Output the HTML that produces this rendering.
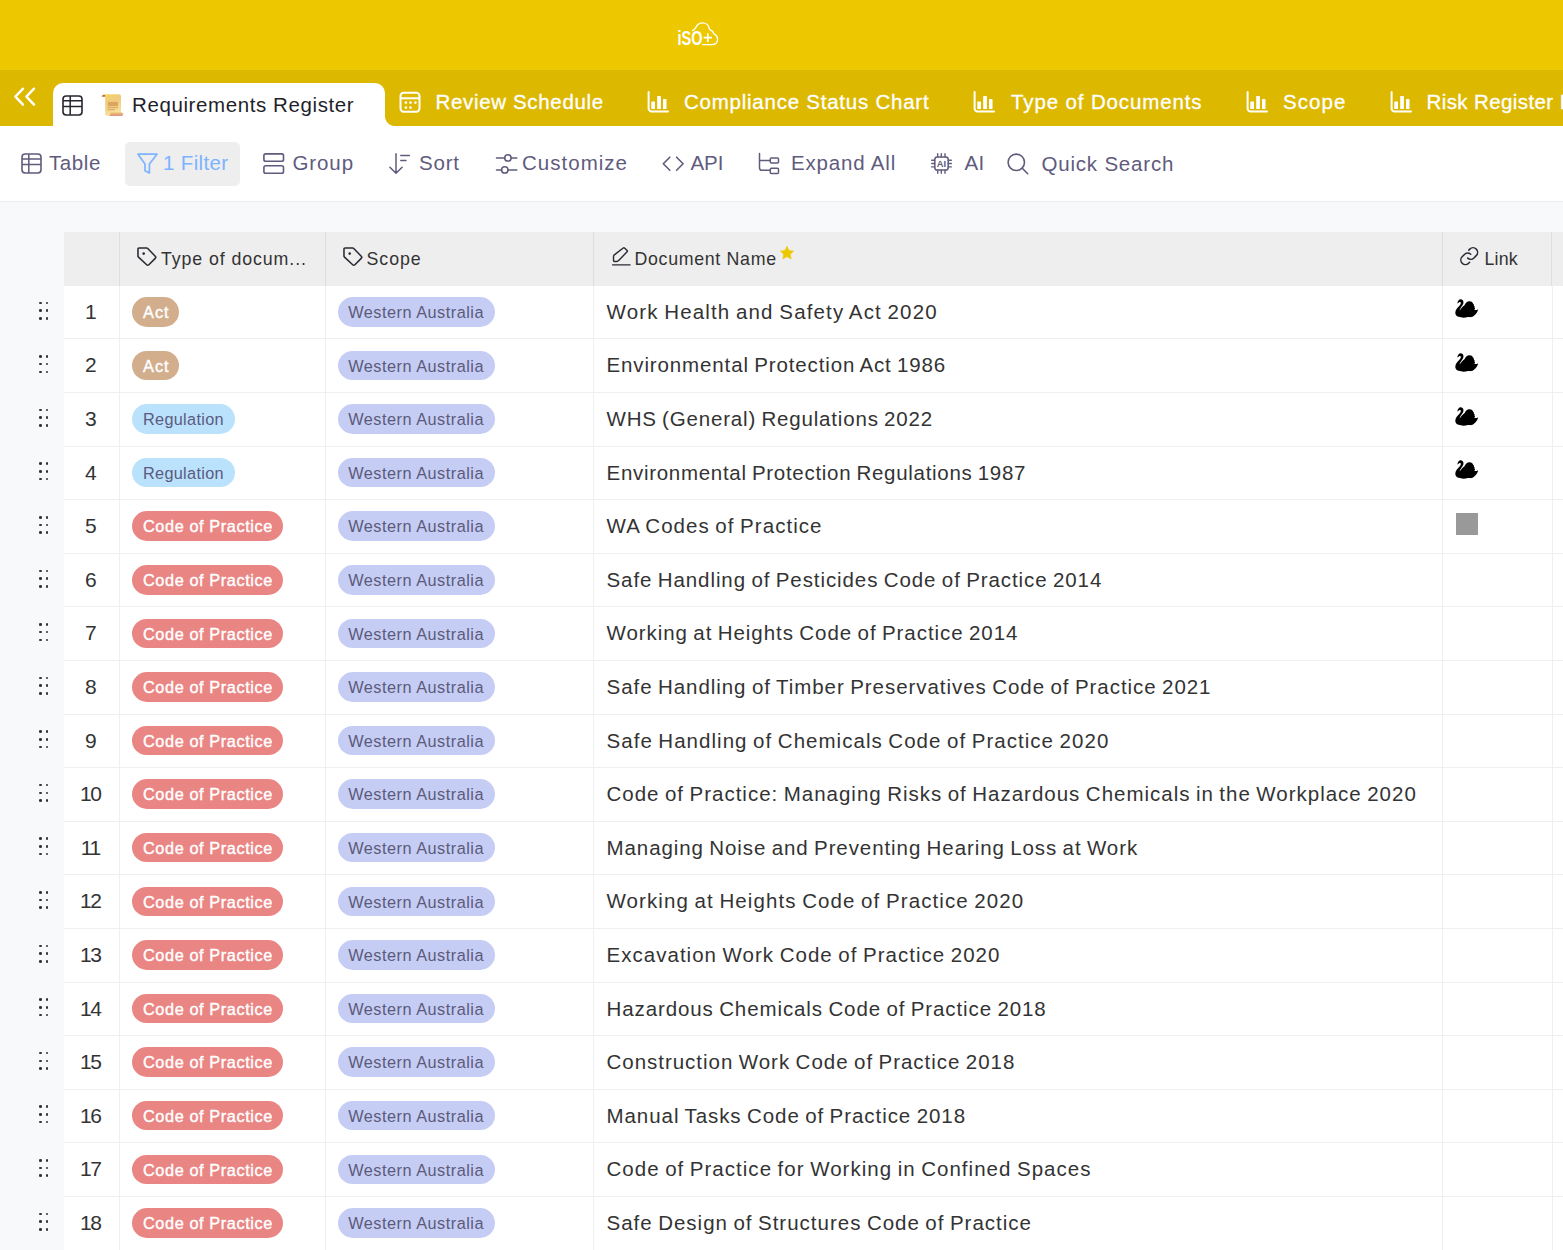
<!DOCTYPE html>
<html lang="en">
<head>
<meta charset="utf-8">
<title>Requirements Register</title>
<style>
*{box-sizing:border-box;margin:0;padding:0}
html,body{width:1563px;height:1250px;overflow:hidden}
body{position:relative;background:#f8f9fb;font-family:"Liberation Sans",sans-serif;color:#333;-webkit-font-smoothing:antialiased}
.page{position:absolute;left:0;top:0;width:1563px;height:1250px;overflow:hidden}
svg{display:block;overflow:visible}
.abs{position:absolute;white-space:nowrap}

/* ---------- top brand bar ---------- */
.hdr{position:absolute;left:0;top:0;width:1563px;height:70px;background:#edc800}
.logo{position:absolute;left:676px;top:20px;width:46px;height:28px}

/* ---------- tab bar ---------- */
.tabs{position:absolute;left:0;top:70px;width:1563px;height:56px;background:#ddb800;overflow:hidden}
.collapse{position:absolute;left:12px;top:15px;width:26px;height:22px}
.tab-active{position:absolute;left:53px;top:13px;width:332px;height:43px;background:#fff;border-radius:10px 10px 0 0}
.tab-active:after{content:"";position:absolute;right:-10px;bottom:0;width:10px;height:10px;background:radial-gradient(circle at 100% 0,rgba(255,255,255,0) 9.5px,#fff 10.5px)}
.tab-active .ico{position:absolute;left:9px;top:12px;width:21px;height:21px}
.tab-active .scroll{position:absolute;left:48px;top:10px;width:22px;height:23px}
.tab-active .lbl{position:absolute;left:79px;top:10px;font-size:20.5px;line-height:24px;color:#1f1f2b;letter-spacing:.6px;white-space:nowrap}
.tab{position:absolute;top:0;height:56px;color:#fff;white-space:nowrap}
.tab .ico{position:absolute;left:0;top:21px;width:22px;height:22px}
.tab .lbl{position:absolute;left:37px;top:20px;font-size:20.5px;line-height:24px;font-weight:400;letter-spacing:.55px;-webkit-text-stroke:.32px #fff}

/* ---------- toolbar ---------- */
.toolbar{position:absolute;left:0;top:126px;width:1563px;height:76px;background:#fff;border-bottom:1px solid #ebecef}
.tb{position:absolute;top:27px;height:21px;color:#5f5b7d;white-space:nowrap}
.tb .ico{position:absolute;left:0;top:0;width:21px;height:21px}
.tb .lbl{position:absolute;top:-2px;font-size:20.5px;line-height:24px;letter-spacing:.6px}
.tb-filter-bg{position:absolute;left:125px;top:15.5px;width:114.5px;height:44.5px;border-radius:5px;background:#eeeeee}
.tb.filter{color:#7db3ff}

/* ---------- grid ---------- */
.thead{position:absolute;left:64px;top:232px;width:1499px;height:54px;background:#eeeeee}
.th{position:absolute;top:0;height:54px;border-right:1px solid #dedede;color:#333;white-space:nowrap}
.th .ico{position:absolute;top:14.5px;width:20px;height:20px}
.th .lbl{position:absolute;top:15.5px;font-size:17.8px;line-height:22px;letter-spacing:.45px}
.gridbg{position:absolute;left:64px;top:286px;width:1499px;height:964px;background:#fff;box-shadow:inset 0 -1px 0 #f6f6f6}
.row{position:absolute;left:0;width:1563px;height:53.59px}
.cells{position:absolute;left:64px;top:0;width:1499px;height:53.59px;background:#fff;border-bottom:1px solid #efefef}
.c{position:absolute;top:0;height:53.59px;border-right:1px solid #efefef;white-space:nowrap}
.c-num{left:0;width:55.5px;text-align:center;font-size:21px;line-height:52.2px;color:#333;padding-right:1px}
.c-num.two{letter-spacing:-1.5px;padding-right:2px}
.c-type{left:55.5px;width:206.5px}
.c-scope{left:262px;width:268px}
.c-name{left:530px;width:849px;padding-left:12.5px;font-size:20.5px;line-height:52.6px;letter-spacing:.85px;word-spacing:-1.2px;color:#333}
.c-link{left:1379px;width:109.5px}
.c-rest{left:1488.5px;width:20px;border-right:0}
.drag{position:absolute;left:39px;top:15.5px;width:10px;height:18px}
.drag i{position:absolute;width:2.6px;height:2.6px;border-radius:50%;background:#333}
.drag i:nth-child(1){left:.2px;top:.2px}.drag i:nth-child(2){left:6.8px;top:.2px}
.drag i:nth-child(3){left:.2px;top:7.9px}.drag i:nth-child(4){left:6.8px;top:7.9px}
.drag i:nth-child(5){left:.2px;top:15.6px}.drag i:nth-child(6){left:6.8px;top:15.6px}
.pill{position:absolute;left:12.5px;top:11.2px;height:29.5px;border-radius:15px;padding:0 11px;font-size:16.3px;line-height:31px;white-space:nowrap}
.p-act{background:#d2ae8d;color:#fff;letter-spacing:1.05px;padding:0 9px 0 11px;-webkit-text-stroke:.4px #fff}
.p-reg{background:#bae2fd;color:#5c5a80;letter-spacing:.3px}
.p-cop{background:#e98583;color:#fff;letter-spacing:.6px;padding:0 10.5px 0 11px;-webkit-text-stroke:.4px #fff}
.p-wa{background:#c5cdf5;color:#5c5a7a;letter-spacing:.5px;left:11.6px;padding:0 10.6px}
.swan{position:absolute;left:12.2px;top:13.5px;width:23.6px;height:19.6px}
.greybox{position:absolute;left:12.7px;top:12.6px;width:22.6px;height:22.4px;background:#999}

</style>
</head>
<body>
<div class="page">
<div class="hdr">
<svg class="logo" viewBox="0 0 46 28"><text x="1.500" y="25.200" font-family="Liberation Sans, sans-serif" font-weight="700" font-size="20" textLength="25" lengthAdjust="spacingAndGlyphs" fill="#fff">iSO</text><g transform="translate(1.300 0)"><path d="M15.200 10.600c1.600-.8 2.800-2.200 3.500-3.500 1.200-2.400 3.700-4.200 6.500-4.200 3.500 0 6.300 2.500 6.800 5.800.1.900.5 1.200 1.300 1.500 1.500.6 2.500 1.600 3 3 .2.600.6.900 1.100 1.200 1.800 1 2.900 2.800 2.900 4.900 0 3.100-2.500 5.300-5.600 5.300H25.300" fill="none" stroke="#fff" stroke-width="1.400" stroke-linecap="round" stroke-linejoin="round"/><path d="M26.300 17.600h8.400M30.500 13.300v8.700" stroke="#fff" stroke-width="1.700" fill="none"/></g></svg>
</div>

<div class="tabs">
<svg class="collapse" viewBox="0 0 26 22"><path d="M11 3.700 3.400 11.700l7.600 8M22 3.700l-7.600 8 7.600 8" fill="none" stroke="#fff" stroke-width="2.400" stroke-linecap="round" stroke-linejoin="round"/></svg>
<div class="tab-active">
<svg class="ico" viewBox="0 0 21 21"><rect x="1" y="1" width="19" height="19" rx="3.200" fill="none" stroke="#26262e" stroke-width="1.600"/><path d="M1 5.800h19M1 11.500h19M8.200 1v19" fill="none" stroke="#26262e" stroke-width="1.500"/></svg>
<svg class="scroll" viewBox="0 0 22 23"><defs><linearGradient id="sg" x1="0" y1="0" x2=".3" y2="1"><stop offset="0" stop-color="#f3d662"/><stop offset=".45" stop-color="#f0c97f"/><stop offset="1" stop-color="#f5e29c"/></linearGradient><linearGradient id="sg2" x1="0" y1="0" x2="0" y2="1"><stop offset="0" stop-color="#ecc070"/><stop offset="1" stop-color="#df9080"/></linearGradient></defs><path d="M.8 3.800C.8 2.300 2 1.700 3.400 1.700c1.200 0 2 .8 2 2.100z" fill="#c4692a"/><path d="M3.200 1.200h14.800a2 2 0 0 1 2 2v17.500a2 2 0 0 1-2 2H6.200a2 2 0 0 1-2-2V3.800c0-1.500-.3-2.200-1-2.600z" fill="url(#sg)"/><rect x="7" y="8.900" width="10" height="4.300" fill="#dba55f"/><rect x="6.500" y="14.200" width="10.500" height="1" fill="#dba55f"/><rect x="6.500" y="16.200" width="7.500" height="1" fill="#dba55f"/><path d="M9.500 19.600h11a1.700 1.700 0 0 1 0 3.400H8c1 -.4 1.500-1.500 1.500-3.400z" fill="url(#sg2)"/></svg>
<span class="lbl">Requirements Register</span>
</div>
<div class="tab" style="left:398.500px"><svg class="ico" viewBox="0 0 22 22"><rect x="1.500" y="1.700" width="19" height="19" rx="3.200" fill="none" stroke="#fff" stroke-width="2"/><path d="M1.500 7.300h19" stroke="#fff" stroke-width="2"/><circle cx="6.900" cy="11.600" r="1.300" fill="#fff"/><circle cx="11.500" cy="11.600" r="1.300" fill="#fff"/><circle cx="16.400" cy="11.600" r="1.300" fill="#fff"/><circle cx="6.900" cy="16.600" r="1.300" fill="#fff"/><circle cx="11.500" cy="16.600" r="1.300" fill="#fff"/></svg><span class="lbl" style="letter-spacing:.66px">Review Schedule</span></div>
<div class="tab" style="left:647px"><svg class="ico" viewBox="0 0 22 22"><path d="M1.600 1v16.500a3 3 0 0 0 3 3H21" fill="none" stroke="#fff" stroke-width="2" stroke-linecap="round"/><rect x="4.300" y="10.400" width="3.700" height="7.600" rx=".6" fill="#fff"/><rect x="10.200" y="5" width="3.700" height="13" rx=".6" fill="#fff"/><rect x="16" y="8.100" width="3.500" height="9.900" rx=".6" fill="#fff"/></svg><span class="lbl" style="letter-spacing:.76px">Compliance Status Chart</span></div>
<div class="tab" style="left:973px"><svg class="ico" viewBox="0 0 22 22"><path d="M1.600 1v16.500a3 3 0 0 0 3 3H21" fill="none" stroke="#fff" stroke-width="2" stroke-linecap="round"/><rect x="4.300" y="10.400" width="3.700" height="7.600" rx=".6" fill="#fff"/><rect x="10.200" y="5" width="3.700" height="13" rx=".6" fill="#fff"/><rect x="16" y="8.100" width="3.500" height="9.900" rx=".6" fill="#fff"/></svg><span class="lbl" style="left:38px;letter-spacing:.87px">Type of Documents</span></div>
<div class="tab" style="left:1246px"><svg class="ico" viewBox="0 0 22 22"><path d="M1.600 1v16.500a3 3 0 0 0 3 3H21" fill="none" stroke="#fff" stroke-width="2" stroke-linecap="round"/><rect x="4.300" y="10.400" width="3.700" height="7.600" rx=".6" fill="#fff"/><rect x="10.200" y="5" width="3.700" height="13" rx=".6" fill="#fff"/><rect x="16" y="8.100" width="3.500" height="9.900" rx=".6" fill="#fff"/></svg><span class="lbl" style="letter-spacing:1.05px">Scope</span></div>
<div class="tab" style="left:1389.500px"><svg class="ico" viewBox="0 0 22 22"><path d="M1.600 1v16.500a3 3 0 0 0 3 3H21" fill="none" stroke="#fff" stroke-width="2" stroke-linecap="round"/><rect x="4.300" y="10.400" width="3.700" height="7.600" rx=".6" fill="#fff"/><rect x="10.200" y="5" width="3.700" height="13" rx=".6" fill="#fff"/><rect x="16" y="8.100" width="3.500" height="9.900" rx=".6" fill="#fff"/></svg><span class="lbl" style="letter-spacing:.4px">Risk Register Board</span></div>
</div>

<div class="toolbar">
<div class="tb-filter-bg"></div>
<div class="tb" style="left:20.500px"><svg class="ico" viewBox="0 0 21 21"><rect x="1" y="1" width="19" height="19" rx="3.200" fill="none" stroke="currentColor" stroke-width="1.600"/><path d="M1 5.900h19M1 11.400h19M7.800 1v19" fill="none" stroke="currentColor" stroke-width="1.500"/></svg><span class="lbl" style="left:28.500px;letter-spacing:.6px">Table</span></div>
<div class="tb filter" style="left:136.500px"><svg class="ico" viewBox="0 0 21 21"><path d="M1 1.200h19l-7.600 9.700v9l-4.400-2.200v-6.800z" fill="none" stroke="currentColor" stroke-width="1.700" stroke-linejoin="round"/></svg><span class="lbl" style="left:26.500px;letter-spacing:.35px">1 Filter</span></div>
<div class="tb" style="left:262.500px"><svg class="ico" viewBox="0 0 21 21"><rect x=".9" y=".9" width="19.600" height="7.400" rx="1.800" fill="none" stroke="currentColor" stroke-width="1.600"/><rect x=".9" y="12.800" width="19.600" height="7.400" rx="1.800" fill="none" stroke="currentColor" stroke-width="1.600"/></svg><span class="lbl" style="left:30px;letter-spacing:.9px">Group</span></div>
<div class="tb" style="left:389px"><svg class="ico" viewBox="0 0 21 21"><path d="M7 .8v19.400M.9 14.200 7 20.300l6.100-6.100M11.800 2.600h8.500M11.800 7.600h5.200" fill="none" stroke="currentColor" stroke-width="1.500" stroke-linecap="round" stroke-linejoin="round"/></svg><span class="lbl" style="left:30px;letter-spacing:.8px">Sort</span></div>
<div class="tb" style="left:495.500px"><svg class="ico" viewBox="0 0 21 21"><path d="M.5 4.900h8.200M15.200 4.900h5.600M.5 16.900h5M12 16.900h8.800" fill="none" stroke="currentColor" stroke-width="1.500" stroke-linecap="round"/><circle cx="11.900" cy="4.900" r="3.200" fill="none" stroke="currentColor" stroke-width="1.500"/><circle cx="8.800" cy="16.900" r="3.200" fill="none" stroke="currentColor" stroke-width="1.500"/></svg><span class="lbl" style="left:26.500px;letter-spacing:1.02px">Customize</span></div>
<div class="tb" style="left:662px"><svg class="ico" viewBox="0 0 21 21"><path d="M7.800 4.200 1.300 10.800l6.500 6.500M14.600 4.200l6.500 6.600-6.500 6.500" fill="none" stroke="currentColor" stroke-width="1.600" stroke-linecap="round" stroke-linejoin="round"/></svg><span class="lbl" style="left:28.500px;letter-spacing:-.1px">API</span></div>
<div class="tb" style="left:758px"><svg class="ico" viewBox="0 0 21 21"><path d="M1.500.6v14.500a2.200 2.200 0 0 0 2.200 2.200h8.600M1.500 7.400h10.800" fill="none" stroke="currentColor" stroke-width="1.500" stroke-linecap="round"/><rect x="12.300" y="4.900" width="8.200" height="5.200" rx="1" fill="none" stroke="currentColor" stroke-width="1.500"/><rect x="12.300" y="15.200" width="8.200" height="5.200" rx="1" fill="none" stroke="currentColor" stroke-width="1.500"/></svg><span class="lbl" style="left:33px;letter-spacing:.82px">Expand All</span></div>
<div class="tb" style="left:931px"><svg class="ico" viewBox="0 0 21 21"><rect x="3.800" y="3.900" width="13.400" height="13.200" rx="2.600" fill="none" stroke="currentColor" stroke-width="1.500"/><path d="M6.700.7v3M10.300.7v3M14 .7v3M6.700 17.200v3M10.300 17.200v3M14 17.200v3M.7 7.300h3M.7 10.500h3M.7 13.900h3M17.300 7.300h3M17.300 10.500h3M17.300 13.900h3" stroke="currentColor" stroke-width="1.400" stroke-linecap="round"/><text x="10.500" y="13.900" text-anchor="middle" font-family="Liberation Sans, sans-serif" font-weight="700" font-size="9.300" fill="currentColor">AI</text></svg><span class="lbl" style="left:33.500px;letter-spacing:.3px">AI</span></div>
<div class="tb" style="left:1007px"><svg class="ico" viewBox="0 0 21 21"><circle cx="9.300" cy="9.300" r="8.200" fill="none" stroke="currentColor" stroke-width="1.600"/><path d="m15.300 15.300 5.400 5.400" stroke="currentColor" stroke-width="1.600" stroke-linecap="round"/></svg><span class="lbl" style="left:34.500px;top:-1px;letter-spacing:.8px">Quick Search</span></div>
</div>

<div class="thead">
<div class="th" style="left:0;width:55.500px"></div>
<div class="th" style="left:55.500px;width:206.500px"><svg class="ico" style="left:16.700px;top:14.100px;width:20.800px;height:20.800px" viewBox="0 0 20 20"><path d="M1.900 2.900a1 1 0 0 1 1-1h7.300a1.600 1.600 0 0 1 1.100.5l7.200 7.400a1.500 1.500 0 0 1 0 2.100l-6.100 6.100a1.500 1.500 0 0 1-2.100 0l-7.900-7.300a1.600 1.600 0 0 1-.5-1.100z" fill="none" stroke="#2a2a33" stroke-width="1.500" stroke-linejoin="round"/><circle cx="7.400" cy="7.300" r="1.250" fill="#2a2a33"/></svg><span class="lbl" style="left:41.500px;letter-spacing:.9px">Type of docum...</span></div>
<div class="th" style="left:262px;width:268px"><svg class="ico" style="left:16.300px;top:14.300px;width:20.800px;height:20.800px" viewBox="0 0 20 20"><path d="M1.900 2.900a1 1 0 0 1 1-1h7.300a1.600 1.600 0 0 1 1.100.5l7.200 7.400a1.500 1.500 0 0 1 0 2.100l-6.100 6.100a1.500 1.500 0 0 1-2.100 0l-7.900-7.300a1.600 1.600 0 0 1-.5-1.100z" fill="none" stroke="#2a2a33" stroke-width="1.500" stroke-linejoin="round"/><circle cx="7.400" cy="7.300" r="1.250" fill="#2a2a33"/></svg><span class="lbl" style="left:40.500px;letter-spacing:.95px">Scope</span></div>
<div class="th" style="left:530px;width:849px"><svg class="ico" style="left:18px;top:15px;width:19px;height:19px" viewBox="0 0 20 20"><path d="M11.800 1.100a1 1 0 0 1 1.400 0l2.700 2.500a1 1 0 0 1 0 1.400L7 14.300a3 3 0 0 1-2.100.9H2.600a1 1 0 0 1-1-1V9.700a1.500 1.500 0 0 1 .5-1.100z" fill="none" stroke="#2a2a33" stroke-width="1.500" stroke-linejoin="round"/><path d="M.6 18.800h18.400" stroke="#2a2a33" stroke-width="1.500" stroke-linecap="round"/></svg><span class="lbl" style="left:40.500px;letter-spacing:.68px">Document Name</span><svg class="ico" style="left:186px;top:13.600px;width:14px;height:13.500px" viewBox="0 0 24 23"><path d="M12 .8l3.300 7.100 7.800.9-5.800 5.300 1.600 7.700L12 17.900l-6.900 3.900 1.600-7.700L.9 8.800l7.800-.9z" fill="#edc800" stroke="#edc800" stroke-width="1.500" stroke-linejoin="round"/></svg></div>
<div class="th" style="left:1379px;width:108.500px"><svg class="ico" style="left:14.300px;top:12.200px;width:24.400px;height:24.400px" viewBox="0 0 256 256"><path d="M137.540 186.360a8 8 0 0 1 0 11.310l-9.940 10A56 56 0 0 1 48.380 128.400L72.500 104.280A56 56 0 0 1 149.310 102a8 8 0 1 1-10.640 12 40 40 0 0 0-54.850 1.630L59.700 139.720a40 40 0 0 0 56.580 56.580l9.940-9.940A8 8 0 0 1 137.540 186.360Zm70.080-138a56.080 56.080 0 0 0-79.220 0l-9.940 9.950a8 8 0 0 0 11.320 11.310l9.940-9.940a40 40 0 0 1 56.580 56.580L172.180 140.400A40 40 0 0 1 117.330 142 8 8 0 1 0 106.690 154a56 56 0 0 0 76.810-2.260l24.120-24.120A56.080 56.080 0 0 0 207.620 48.380Z" fill="#2a2a33"/></svg><span class="lbl" style="left:41.500px;letter-spacing:.2px">Link</span></div>
</div>
<div class="grid">
<div class="gridbg"></div>
<div class="row" style="top:285.90px"><span class="drag"><i></i><i></i><i></i><i></i><i></i><i></i></span><div class="cells"><div class="c c-num">1</div><div class="c c-type"><span class="pill p-act">Act</span></div><div class="c c-scope"><span class="pill p-wa">Western Australia</span></div><div class="c c-name" style="letter-spacing:1.150px">Work Health and Safety Act 2020</div><div class="c c-link"><svg class="swan" viewBox="0 0 24 20"><path d="M2.300 4.600C2.800 2 4 .3 5.600 .3C7.600 .3 8.800 1.800 8.600 3.800C8.400 5.600 7.300 6.800 6.200 8.300C5.400 9.400 4.700 10.600 4.800 11.800C6 9.500 8 7.500 9.600 6.400C10.600 4.400 11.800 2.900 13.200 2.500C14.500 2.100 16 2.100 17 2.900C17.800 3.500 18.300 4.400 18.600 5.200L19.400 5.800L19.200 6.900L20.100 7.600L19.800 8.800L20.500 9.600L19.700 10.900C20.800 11.600 22.300 11.300 23.500 10.400C23.300 12.400 22.400 13.900 21.200 15.200C19.900 16.700 18.400 18 16.600 18.500C15.200 18.900 14.200 18.300 13 18.500C10.500 19.200 6.500 19.300 3.600 18.200C1.200 17.300 0 15.500 .3 13.400C.6 11 2.200 9.200 3.700 7.700C4.800 6.500 5.900 5.300 5.900 4C5.900 3 5 2.800 4.200 3.200C3.500 3.600 3 4.200 2.300 4.600Z" fill="#000"/></svg></div><div class="c c-rest"></div></div></div>
<div class="row" style="top:339.49px"><span class="drag"><i></i><i></i><i></i><i></i><i></i><i></i></span><div class="cells"><div class="c c-num">2</div><div class="c c-type"><span class="pill p-act">Act</span></div><div class="c c-scope"><span class="pill p-wa">Western Australia</span></div><div class="c c-name" style="letter-spacing:0.868px">Environmental Protection Act 1986</div><div class="c c-link"><svg class="swan" viewBox="0 0 24 20"><path d="M2.300 4.600C2.800 2 4 .3 5.600 .3C7.600 .3 8.800 1.800 8.600 3.800C8.400 5.600 7.300 6.800 6.200 8.300C5.400 9.400 4.700 10.600 4.800 11.800C6 9.500 8 7.500 9.600 6.400C10.600 4.400 11.800 2.900 13.200 2.500C14.500 2.100 16 2.100 17 2.900C17.800 3.500 18.300 4.400 18.600 5.200L19.400 5.800L19.200 6.900L20.100 7.600L19.800 8.800L20.500 9.600L19.700 10.900C20.800 11.600 22.300 11.300 23.500 10.400C23.300 12.400 22.400 13.900 21.200 15.200C19.900 16.700 18.400 18 16.600 18.500C15.200 18.900 14.200 18.300 13 18.500C10.500 19.200 6.500 19.300 3.600 18.200C1.200 17.300 0 15.500 .3 13.400C.6 11 2.200 9.200 3.700 7.700C4.800 6.500 5.900 5.300 5.900 4C5.900 3 5 2.800 4.200 3.200C3.500 3.600 3 4.200 2.300 4.600Z" fill="#000"/></svg></div><div class="c c-rest"></div></div></div>
<div class="row" style="top:393.08px"><span class="drag"><i></i><i></i><i></i><i></i><i></i><i></i></span><div class="cells"><div class="c c-num">3</div><div class="c c-type"><span class="pill p-reg">Regulation</span></div><div class="c c-scope"><span class="pill p-wa">Western Australia</span></div><div class="c c-name" style="letter-spacing:0.822px">WHS (General) Regulations 2022</div><div class="c c-link"><svg class="swan" viewBox="0 0 24 20"><path d="M2.300 4.600C2.800 2 4 .3 5.600 .3C7.600 .3 8.800 1.800 8.600 3.800C8.400 5.600 7.300 6.800 6.200 8.300C5.400 9.400 4.700 10.600 4.800 11.800C6 9.500 8 7.500 9.600 6.400C10.600 4.400 11.800 2.900 13.200 2.500C14.500 2.100 16 2.100 17 2.900C17.800 3.500 18.300 4.400 18.600 5.200L19.400 5.800L19.200 6.900L20.100 7.600L19.800 8.800L20.500 9.600L19.700 10.900C20.800 11.600 22.300 11.300 23.500 10.400C23.300 12.400 22.400 13.900 21.200 15.200C19.900 16.700 18.400 18 16.600 18.500C15.200 18.900 14.200 18.300 13 18.500C10.500 19.200 6.500 19.300 3.600 18.200C1.200 17.300 0 15.500 .3 13.400C.6 11 2.200 9.200 3.700 7.700C4.800 6.500 5.900 5.300 5.900 4C5.900 3 5 2.800 4.200 3.200C3.500 3.600 3 4.200 2.300 4.600Z" fill="#000"/></svg></div><div class="c c-rest"></div></div></div>
<div class="row" style="top:446.67px"><span class="drag"><i></i><i></i><i></i><i></i><i></i><i></i></span><div class="cells"><div class="c c-num">4</div><div class="c c-type"><span class="pill p-reg">Regulation</span></div><div class="c c-scope"><span class="pill p-wa">Western Australia</span></div><div class="c c-name" style="letter-spacing:0.707px">Environmental Protection Regulations 1987</div><div class="c c-link"><svg class="swan" viewBox="0 0 24 20"><path d="M2.300 4.600C2.800 2 4 .3 5.600 .3C7.600 .3 8.800 1.800 8.600 3.800C8.400 5.600 7.300 6.800 6.200 8.300C5.400 9.400 4.700 10.600 4.800 11.800C6 9.500 8 7.500 9.600 6.400C10.600 4.400 11.800 2.900 13.200 2.500C14.500 2.100 16 2.100 17 2.900C17.800 3.500 18.300 4.400 18.600 5.200L19.400 5.800L19.200 6.900L20.100 7.600L19.800 8.800L20.500 9.600L19.700 10.900C20.800 11.600 22.300 11.300 23.500 10.400C23.300 12.400 22.400 13.900 21.200 15.200C19.900 16.700 18.400 18 16.600 18.500C15.200 18.900 14.200 18.300 13 18.500C10.500 19.200 6.500 19.300 3.600 18.200C1.200 17.300 0 15.500 .3 13.400C.6 11 2.200 9.200 3.700 7.700C4.800 6.500 5.900 5.300 5.900 4C5.900 3 5 2.800 4.200 3.200C3.500 3.600 3 4.200 2.300 4.600Z" fill="#000"/></svg></div><div class="c c-rest"></div></div></div>
<div class="row" style="top:500.26px"><span class="drag"><i></i><i></i><i></i><i></i><i></i><i></i></span><div class="cells"><div class="c c-num">5</div><div class="c c-type"><span class="pill p-cop">Code of Practice</span></div><div class="c c-scope"><span class="pill p-wa">Western Australia</span></div><div class="c c-name" style="letter-spacing:1.051px">WA Codes of Practice</div><div class="c c-link"><span class="greybox"></span></div><div class="c c-rest"></div></div></div>
<div class="row" style="top:553.85px"><span class="drag"><i></i><i></i><i></i><i></i><i></i><i></i></span><div class="cells"><div class="c c-num">6</div><div class="c c-type"><span class="pill p-cop">Code of Practice</span></div><div class="c c-scope"><span class="pill p-wa">Western Australia</span></div><div class="c c-name" style="letter-spacing:0.916px">Safe Handling of Pesticides Code of Practice 2014</div><div class="c c-link"></div><div class="c c-rest"></div></div></div>
<div class="row" style="top:607.44px"><span class="drag"><i></i><i></i><i></i><i></i><i></i><i></i></span><div class="cells"><div class="c c-num">7</div><div class="c c-type"><span class="pill p-cop">Code of Practice</span></div><div class="c c-scope"><span class="pill p-wa">Western Australia</span></div><div class="c c-name" style="letter-spacing:0.943px">Working at Heights Code of Practice 2014</div><div class="c c-link"></div><div class="c c-rest"></div></div></div>
<div class="row" style="top:661.03px"><span class="drag"><i></i><i></i><i></i><i></i><i></i><i></i></span><div class="cells"><div class="c c-num">8</div><div class="c c-type"><span class="pill p-cop">Code of Practice</span></div><div class="c c-scope"><span class="pill p-wa">Western Australia</span></div><div class="c c-name" style="letter-spacing:0.953px">Safe Handling of Timber Preservatives Code of Practice 2021</div><div class="c c-link"></div><div class="c c-rest"></div></div></div>
<div class="row" style="top:714.62px"><span class="drag"><i></i><i></i><i></i><i></i><i></i><i></i></span><div class="cells"><div class="c c-num">9</div><div class="c c-type"><span class="pill p-cop">Code of Practice</span></div><div class="c c-scope"><span class="pill p-wa">Western Australia</span></div><div class="c c-name" style="letter-spacing:1.036px">Safe Handling of Chemicals Code of Practice 2020</div><div class="c c-link"></div><div class="c c-rest"></div></div></div>
<div class="row" style="top:768.21px"><span class="drag"><i></i><i></i><i></i><i></i><i></i><i></i></span><div class="cells"><div class="c c-num two">10</div><div class="c c-type"><span class="pill p-cop">Code of Practice</span></div><div class="c c-scope"><span class="pill p-wa">Western Australia</span></div><div class="c c-name" style="letter-spacing:0.992px">Code of Practice: Managing Risks of Hazardous Chemicals in the Workplace 2020</div><div class="c c-link"></div><div class="c c-rest"></div></div></div>
<div class="row" style="top:821.80px"><span class="drag"><i></i><i></i><i></i><i></i><i></i><i></i></span><div class="cells"><div class="c c-num two">11</div><div class="c c-type"><span class="pill p-cop">Code of Practice</span></div><div class="c c-scope"><span class="pill p-wa">Western Australia</span></div><div class="c c-name" style="letter-spacing:0.916px">Managing Noise and Preventing Hearing Loss at Work</div><div class="c c-link"></div><div class="c c-rest"></div></div></div>
<div class="row" style="top:875.39px"><span class="drag"><i></i><i></i><i></i><i></i><i></i><i></i></span><div class="cells"><div class="c c-num two">12</div><div class="c c-type"><span class="pill p-cop">Code of Practice</span></div><div class="c c-scope"><span class="pill p-wa">Western Australia</span></div><div class="c c-name" style="letter-spacing:1.092px">Working at Heights Code of Practice 2020</div><div class="c c-link"></div><div class="c c-rest"></div></div></div>
<div class="row" style="top:928.98px"><span class="drag"><i></i><i></i><i></i><i></i><i></i><i></i></span><div class="cells"><div class="c c-num two">13</div><div class="c c-type"><span class="pill p-cop">Code of Practice</span></div><div class="c c-scope"><span class="pill p-wa">Western Australia</span></div><div class="c c-name" style="letter-spacing:1.027px">Excavation Work Code of Practice 2020</div><div class="c c-link"></div><div class="c c-rest"></div></div></div>
<div class="row" style="top:982.57px"><span class="drag"><i></i><i></i><i></i><i></i><i></i><i></i></span><div class="cells"><div class="c c-num two">14</div><div class="c c-type"><span class="pill p-cop">Code of Practice</span></div><div class="c c-scope"><span class="pill p-wa">Western Australia</span></div><div class="c c-name" style="letter-spacing:0.903px">Hazardous Chemicals Code of Practice 2018</div><div class="c c-link"></div><div class="c c-rest"></div></div></div>
<div class="row" style="top:1036.16px"><span class="drag"><i></i><i></i><i></i><i></i><i></i><i></i></span><div class="cells"><div class="c c-num two">15</div><div class="c c-type"><span class="pill p-cop">Code of Practice</span></div><div class="c c-scope"><span class="pill p-wa">Western Australia</span></div><div class="c c-name" style="letter-spacing:0.977px">Construction Work Code of Practice 2018</div><div class="c c-link"></div><div class="c c-rest"></div></div></div>
<div class="row" style="top:1089.75px"><span class="drag"><i></i><i></i><i></i><i></i><i></i><i></i></span><div class="cells"><div class="c c-num two">16</div><div class="c c-type"><span class="pill p-cop">Code of Practice</span></div><div class="c c-scope"><span class="pill p-wa">Western Australia</span></div><div class="c c-name" style="letter-spacing:0.941px">Manual Tasks Code of Practice 2018</div><div class="c c-link"></div><div class="c c-rest"></div></div></div>
<div class="row" style="top:1143.34px"><span class="drag"><i></i><i></i><i></i><i></i><i></i><i></i></span><div class="cells"><div class="c c-num two">17</div><div class="c c-type"><span class="pill p-cop">Code of Practice</span></div><div class="c c-scope"><span class="pill p-wa">Western Australia</span></div><div class="c c-name" style="letter-spacing:1.027px">Code of Practice for Working in Confined Spaces</div><div class="c c-link"></div><div class="c c-rest"></div></div></div>
<div class="row" style="top:1196.93px"><span class="drag"><i></i><i></i><i></i><i></i><i></i><i></i></span><div class="cells"><div class="c c-num two">18</div><div class="c c-type"><span class="pill p-cop">Code of Practice</span></div><div class="c c-scope"><span class="pill p-wa">Western Australia</span></div><div class="c c-name" style="letter-spacing:0.996px">Safe Design of Structures Code of Practice</div><div class="c c-link"></div><div class="c c-rest"></div></div></div>
</div>
</div>
</body>
</html>
